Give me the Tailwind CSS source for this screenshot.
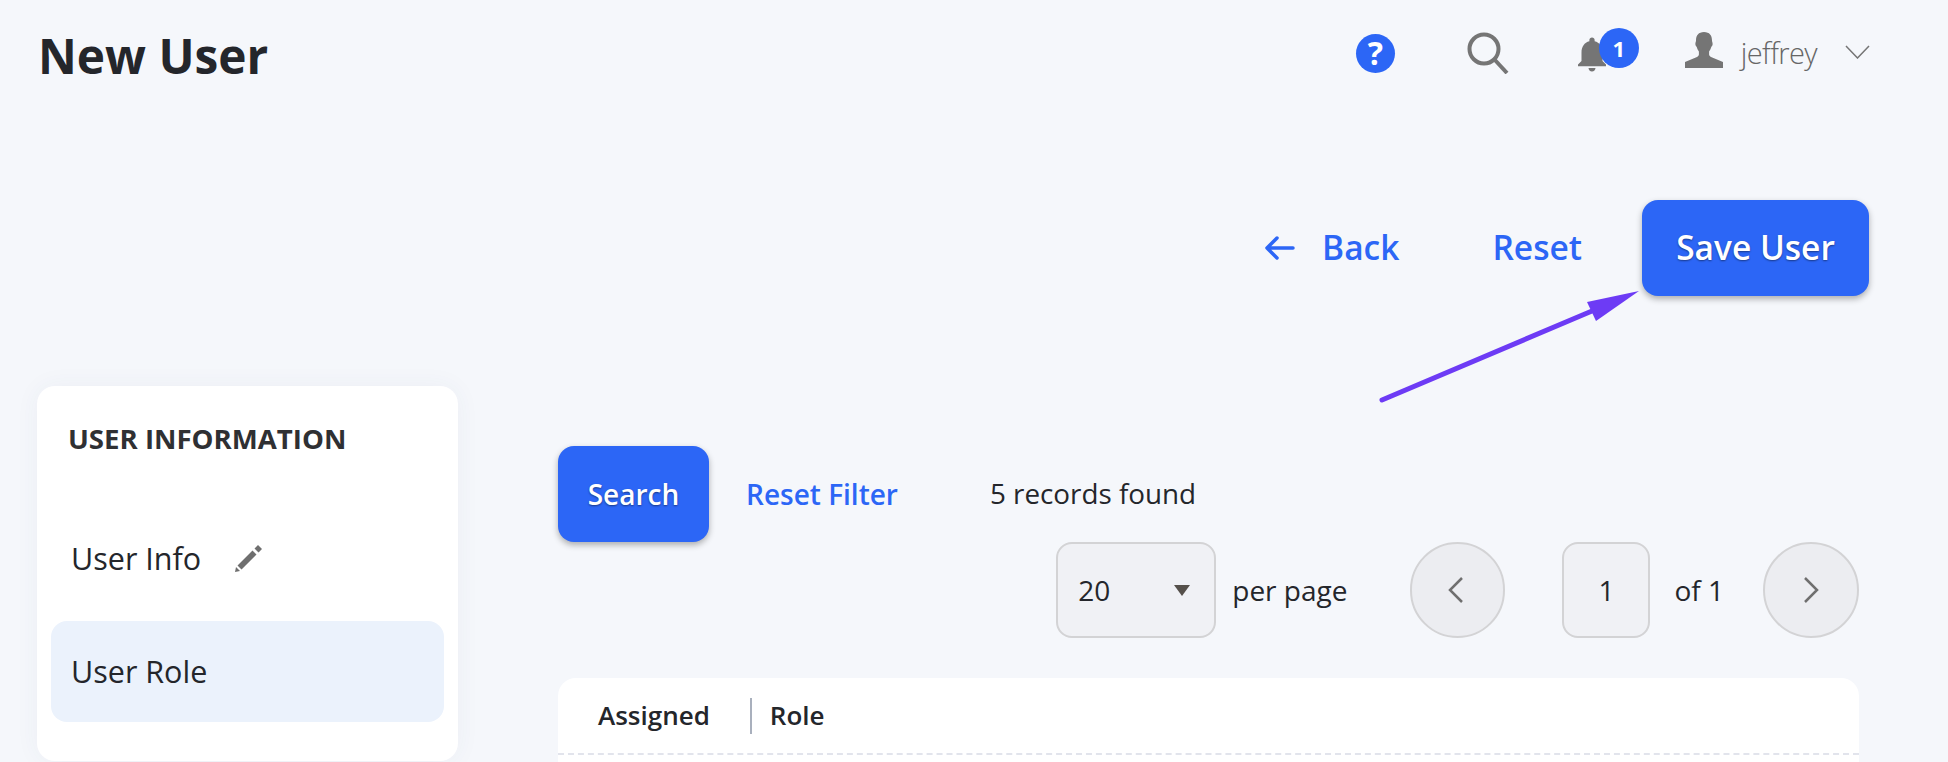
<!DOCTYPE html>
<html lang="en">
<head>
  <meta charset="UTF-8">
  <title>New User</title>
  <script src="https://cdn.jsdelivr.net/npm/@tailwindcss/browser@4"></script>
</head>
<body class="bg-[#f5f7fb] font-['Open_Sans',sans-serif] text-[#24262b]">
  <div class="relative h-[762px] w-[1948px] overflow-hidden">
    <!-- Header -->
    <header class="flex h-[112px] items-center justify-between pl-[38px] pr-[78px]">
      <h1 class="text-[47.8px] font-bold leading-none">New User</h1>
      <div class="mb-[6px] flex items-center">
        <div class="flex h-[39px] w-[39px] items-center justify-center rounded-full bg-[#2c66f6] text-[32px] font-bold leading-none text-white">?</div>
        <svg class="ml-[72px] h-[42px] w-[42px]" viewBox="0 0 42 42" fill="none" stroke="#757575" stroke-width="4">
          <circle cx="17" cy="17" r="14.5"/>
          <path d="M27 27l13 14"/>
        </svg>
        <div class="relative ml-[69px] h-[44px] w-[60px]">
          <svg class="absolute left-[-7px] top-[2px] h-[42px] w-[42px]" viewBox="0 0 24 24" fill="#757575">
            <path d="M12 22c1.1 0 2-.9 2-2h-4c0 1.1.89 2 2 2zm6-6v-5c0-3.07-1.64-5.64-4.5-6.32V4c0-.83-.67-1.5-1.5-1.5s-1.5.67-1.5 1.5v.68C7.63 5.36 6 7.92 6 11v5l-2 2v1h16v-1l-2-2z"/>
          </svg>
          <span class="absolute left-[21px] top-[-3px] flex h-[40px] w-[40px] items-center justify-center rounded-full bg-[#2c66f6] text-[22px] font-bold leading-none text-white">1</span>
        </div>
        <svg class="mb-[6px] ml-[47px] h-[36px] w-[38px]" viewBox="0 0 38 36" fill="#757575">
          <path d="M19 0c5.500 0 8 3.500 8 8.500 0 1.500.8 1.800.6 4-.2 1.400-1 1.800-1.300 2.600-.5 1.500-1 3-2.200 4.300v3.100c0 1.300 1 2 2.500 2.700L38 30v6H0v-6l11.400-4.800c1.500-.7 2.500-1.400 2.500-2.700v-3.100c-1.200-1.300-1.700-2.800-2.200-4.300-.3-.8-1.100-1.200-1.300-2.600-.2-2.200.6-2.500.6-4C11 3.500 13.500 0 19 0z"/>
        </svg>
        <span class="mb-[2px] ml-[18px] text-[29px] font-light leading-none tracking-[-0.6px] text-[#666666]">jeffrey</span>
        <svg class="mb-[2px] ml-[28px] h-[14px] w-[25px]" viewBox="0 0 25 14" fill="none" stroke="#757575" stroke-width="1.500">
          <path d="M1 1l11.500 12L24 1"/>
        </svg>
      </div>
    </header>

    <!-- Page actions -->
    <div class="mt-[88px] flex items-center justify-end pr-[79px]">
      <button class="flex items-center pb-[2px] text-[33.5px] font-semibold text-[#2c66f6]">
        <svg class="mr-[27px] mt-[2px] h-[24px] w-[30px]" viewBox="0 0 30 24" fill="none" stroke="#2c66f6" stroke-width="3.500" stroke-linecap="round" stroke-linejoin="round">
          <path d="M28 12H2M12 2L2 12l10 10"/>
        </svg>
        Back
      </button>
      <button class="ml-[93px] pb-[2px] text-[33.5px] font-semibold text-[#2c66f6]">Reset</button>
      <button class="ml-[60px] h-[96px] w-[227px] rounded-[16px] bg-[#2c66f6] pb-[2px] text-[33.5px] font-semibold text-white shadow-[0_3px_6px_rgba(0,0,0,0.3)] [text-shadow:0_1px_2px_rgba(0,0,0,0.45)]">Save User</button>
    </div>

    <div class="mt-[90px] flex items-start pl-[37px]">
      <!-- Sidebar -->
      <aside class="h-[375px] w-[421px] shrink-0 rounded-[18px] bg-white px-[14px] shadow-[0_0_24px_rgba(60,70,110,0.05)]">
        <h2 class="pl-[17px] pt-[34px] text-[27.6px] font-bold leading-[36px] text-[#2f3033]">USER INFORMATION</h2>
        <div class="mt-[52px] flex h-[101px] items-center pl-[20px] text-[30.5px]">
          User Info
          <svg class="ml-[34px] h-[27px] w-[27px]" viewBox="0 0 27 27" fill="#6f6f6f">
            <path d="M0 27l1-5 4 4zM2.500 20.500L17.500 5.500l4 4-15 15zM19.500 3.500L23 0l4 4-3.500 3.500z"/>
          </svg>
        </div>
        <div class="mt-[12px] flex h-[101px] items-center rounded-[16px] bg-[#ebf2fc] pl-[20px] text-[30.5px]">User Role</div>
      </aside>

      <!-- Roles -->
      <main class="ml-[100px] mt-[60px] w-[1301px] shrink-0">
        <div class="flex h-[96px] items-center">
          <button class="h-[96px] w-[151px] rounded-[16px] bg-[#2c66f6] text-[28px] font-semibold text-white shadow-[0_3px_6px_rgba(0,0,0,0.3)] [text-shadow:0_1px_2px_rgba(0,0,0,0.45)]">Search</button>
          <button class="ml-[37px] text-[28px] font-semibold text-[#2c66f6]">Reset Filter</button>
          <span class="ml-[92px] text-[27.8px]">5 records found</span>
        </div>

        <div class="flex items-center justify-end text-[28px]">
          <div class="flex h-[96px] w-[160px] items-center justify-between rounded-[16px] border-2 border-[#d3d3d5] bg-[#f0f1f5] pl-[20px] pr-[24px]">
            <span>20</span>
            <span class="h-0 w-0 border-x-[8px] border-t-[11px] border-x-transparent border-t-[#55504b]"></span>
          </div>
          <span class="ml-[16px]">per page</span>
          <button class="ml-[63px] flex h-[96px] w-[95px] items-center justify-center rounded-full border-2 border-[#d3d3d5] bg-[#ecedf1] pr-[4px]">
            <svg class="h-[26px] w-[15px]" viewBox="0 0 15 26" fill="none" stroke="#6f6f6f" stroke-width="2.500"><path d="M14 1L2 13l12 12"/></svg>
          </button>
          <div class="ml-[57px] flex h-[96px] w-[88px] items-center justify-center rounded-[16px] border-2 border-[#d3d3d5] bg-[#f0f1f5]">1</div>
          <span class="ml-[24px]">of 1</span>
          <button class="ml-[39px] flex h-[96px] w-[96px] items-center justify-center rounded-full border-2 border-[#d3d3d5] bg-[#ecedf1]">
            <svg class="h-[26px] w-[15px]" viewBox="0 0 15 26" fill="none" stroke="#6f6f6f" stroke-width="2.500"><path d="M1 1l12 12L1 25"/></svg>
          </button>
        </div>

        <div class="mt-[40px] h-[200px] rounded-[18px] bg-white">
          <div class="flex h-[77px] items-center border-b-2 border-dashed border-[#e2e4ec] text-[26px] font-semibold">
            <span class="ml-[40px]">Assigned</span>
            <span class="ml-[40px] h-[36px] w-[2px] bg-[#a9b0bd]"></span>
            <span class="ml-[18px]">Role</span>
          </div>
        </div>
      </main>
    </div>

    <!-- Annotation arrow -->
    <svg class="absolute left-0 top-0 h-[762px] w-[1948px]" viewBox="0 0 1948 762" fill="#6d3bf5">
      <path d="M1382 400L1592 311" fill="none" stroke="#6d3bf5" stroke-width="5" stroke-linecap="round"/>
      <path d="M1639 291L1587 302L1596 321z"/>
    </svg>
  </div>
</body>
</html>
